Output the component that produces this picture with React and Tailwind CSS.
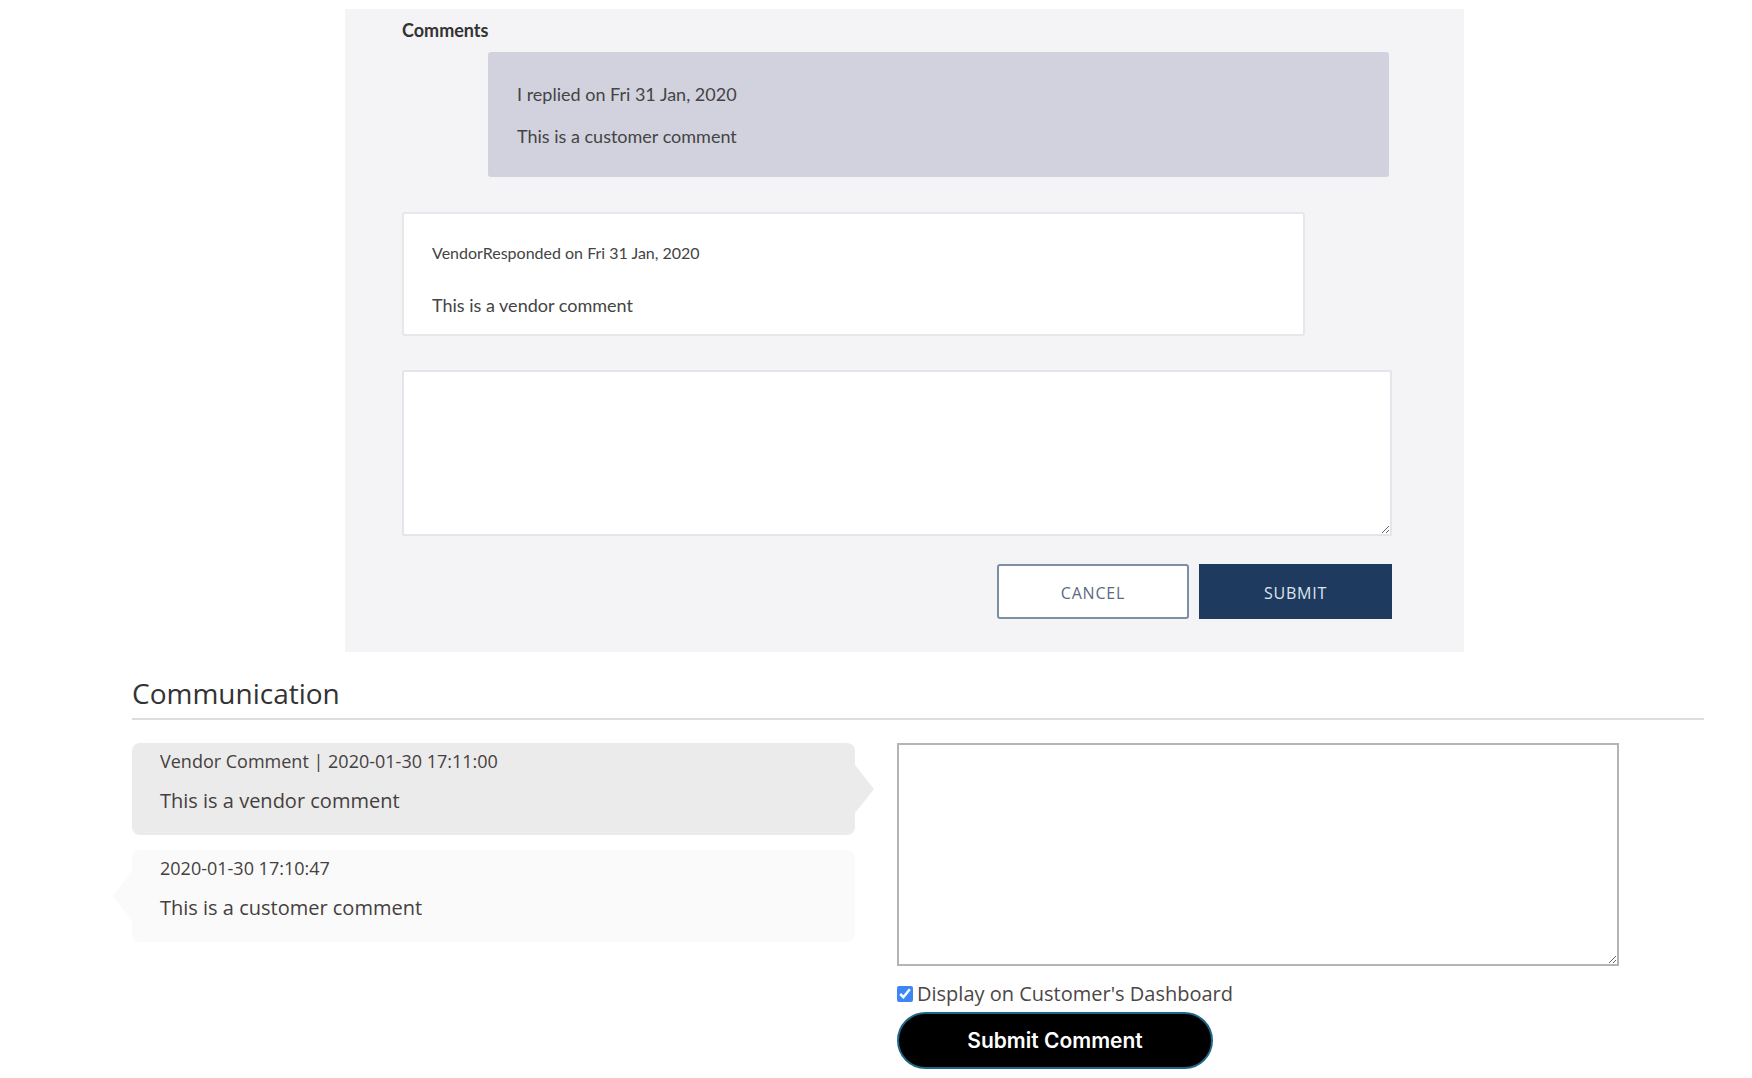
import { useState } from 'react';

const lato = { fontFamily: 'Lato, "Open Sans", sans-serif' };

function TicketComments() {
  return (
    <div className="ml-[345px] mt-[9px] h-[643px] w-[1119px] bg-[#f4f4f6] pl-[57px] pt-[10px]" style={lato}>
      <h3 className="text-[18px] font-bold leading-[22px] text-[#333]">Comments</h3>

      {/* customer reply */}
      <div className="ml-[86px] mt-[11px] h-[125px] w-[901px] rounded-[3px] bg-[#d2d2de] pl-[29px] pt-[31px] text-[18px] leading-[22px] text-[#444]">
        <p>I replied on Fri 31 Jan, 2020</p>
        <p className="mt-[20px]">This is a customer comment</p>
      </div>

      {/* vendor response */}
      <div className="mt-[35px] h-[124px] w-[903px] rounded-[3px] border-2 border-[#e6e6eb] bg-white pl-[28px] pt-[29px] text-[#444]">
        <p className="text-[16px] leading-[20px]">VendorResponded on Fri 31 Jan, 2020</p>
        <p className="mt-[31px] text-[18px] leading-[22px]">This is a vendor comment</p>
      </div>

      <textarea className="mt-[34px] block h-[166px] w-[990px] rounded-[2px] border-2 border-[#e4e4ea] bg-white outline-none" />

      <div className="mt-[28px] flex w-[990px] justify-end gap-[10px]">
        <button className="h-[55px] w-[192px] rounded-[3px] border-2 border-[#7d8ea5] bg-white pt-[3px] text-[16px] tracking-[0.05em] text-[#5a6a80]" style={{ fontFamily: '"Open Sans", sans-serif' }}>
          CANCEL
        </button>
        <button className="h-[55px] w-[193px] bg-[#1e3a5f] pt-[3px] text-[16px] tracking-[0.05em] text-[#dfe5ee]" style={{ fontFamily: '"Open Sans", sans-serif' }}>
          SUBMIT
        </button>
      </div>
    </div>
  );
}

function Bubble({ head, body, side }) {
  const vendor = side === 'right';
  return (
    <div className={`relative h-[92px] w-[723px] rounded-[8px] pl-[28px] pt-[5px] text-[#463f3f] ${vendor ? 'bg-[#ebebeb]' : 'bg-[#fafafa]'}`}>
      {vendor ? (
        <span className="absolute left-full top-1/2 h-0 w-0 -translate-y-1/2 border-y-[24px] border-l-[19px] border-y-transparent border-l-[#ebebeb]" />
      ) : (
        <span className="absolute right-full top-1/2 h-0 w-0 -translate-y-1/2 border-y-[24px] border-r-[19px] border-y-transparent border-r-[#fafafa]" />
      )}
      <p className="text-[18px] leading-[26px]">{head}</p>
      <p className="mt-[14px] text-[20px] leading-[26px]">{body}</p>
    </div>
  );
}

function Communication() {
  const [show, setShow] = useState(true);
  return (
    <section className="ml-[132px] mr-[48px] mt-[24px]" style={{ fontFamily: '"Open Sans", sans-serif' }}>
      <h2 className="text-[28px] leading-[34px] text-[#333]">Communication</h2>
      <div className="mt-[8px] h-[2px] bg-[#dddddd]" />

      <div className="mt-[23px] flex gap-[42px]">
        <div className="flex flex-col gap-[15px]">
          <Bubble side="right" head="Vendor Comment | 2020-01-30 17:11:00" body="This is a vendor comment" />
          <Bubble side="left" head="2020-01-30 17:10:47" body="This is a customer comment" />
        </div>

        <div>
          <textarea className="block h-[223px] w-[722px] border-2 border-[#b4b4b4] bg-white outline-none" />
          <label className="mt-[15px] flex h-[26px] items-center gap-[4px] text-[20px] text-[#4d4646]">
            <input
              type="checkbox"
              checked={show}
              onChange={() => setShow(!show)}
              className="h-4 w-4 accent-[#3d86f5]"
            />
            Display on Customer's Dashboard
          </label>
          <button
            className="mt-[5px] h-[57px] w-[316px] rounded-full border-2 border-[#1d6788] bg-black text-[21px] font-semibold text-white"
            style={{ fontFamily: 'Inter, sans-serif' }}
          >
            Submit Comment
          </button>
        </div>
      </div>
    </section>
  );
}

export default function App() {
  return (
    <div className="min-h-screen overflow-hidden bg-white pb-4">
      <TicketComments />
      <Communication />
    </div>
  );
}
